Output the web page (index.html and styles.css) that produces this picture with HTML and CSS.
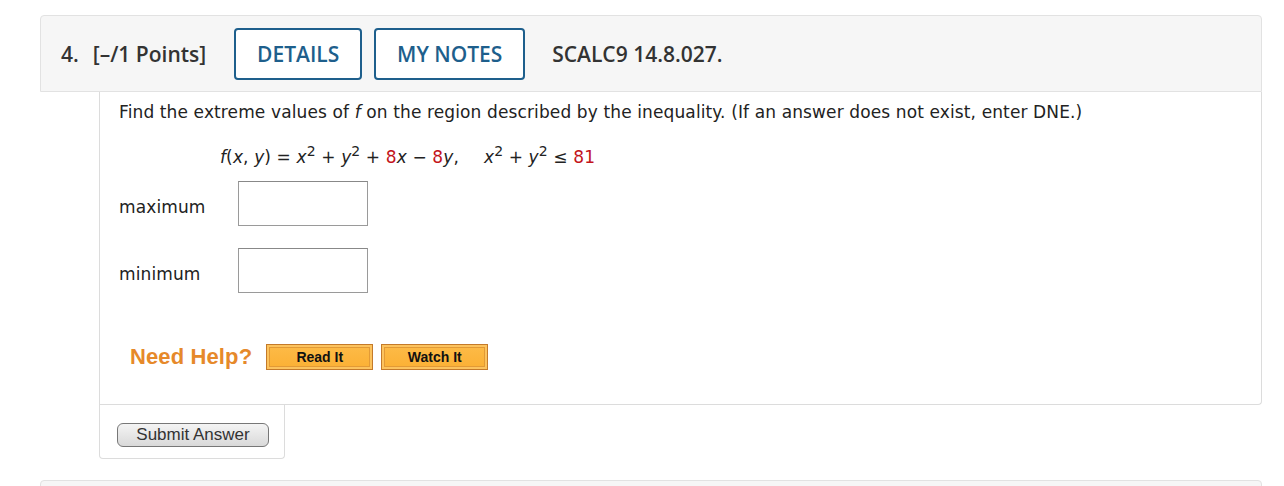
FILE: index.html
```html
<!DOCTYPE html>
<html>
<head>
<meta charset="utf-8">
<link rel="stylesheet" href="styles.css">
</head>
<body>
<div class="page">
  <div class="header">
    <span class="qnum">4.</span>
    <span class="points">[–/1 Points]</span>
    <button class="hbtn details">DETAILS</button>
    <button class="hbtn notes">MY NOTES</button>
    <span class="code">SCALC9 14.8.027.</span>
  </div>
  <div class="content">
    <p class="prompt">Find the extreme values of <i>f</i> on the region described by the inequality. (If an answer does not exist, enter DNE.)</p>
    <p class="formula"><i>f</i>(<i>x</i>, <i>y</i>) = <i>x</i><sup>2</sup> + <i>y</i><sup>2</sup> + <span class="red">8</span><i>x</i> − <span class="red">8</span><i>y</i>,<span class="sp"></span><i>x</i><sup>2</sup> + <i>y</i><sup>2</sup> ≤ <span class="red">81</span></p>
    <div class="row first"><span class="label">maximum</span><span class="box"></span></div>
    <div class="row second"><span class="label">minimum</span><span class="box"></span></div>
    <div class="help">
      <span class="need">Need Help?</span>
      <button class="obtn">Read It</button>
      <button class="obtn">Watch It</button>
    </div>
  </div>
  <div class="submit-area">
    <button class="submit">Submit Answer</button>
  </div>
  <div class="next"></div>
</div>
</body>
</html>
```

FILE: styles.css
```css
html, body { margin: 0; padding: 0; background: #fff; }
.page { padding: 15px 22px 0 40px; }
.header {
  height: 75px;
  background: #f6f6f6;
  border: 1px solid #e2e2e2;
  border-radius: 4px 4px 0 0;
  display: flex;
  align-items: center;
  padding-left: 20px;
  font-family: "Open Sans", sans-serif;
  font-weight: 600;
  font-size: 21px;
  color: #333;
}
.qnum { margin-right: 14px; }
.points { margin-right: 28px; }
.hbtn {
  height: 52px;
  box-sizing: border-box;
  border: 2px solid #1e5f8c;
  border-radius: 4px;
  background: #fff;
  color: #1e5f8c;
  font-family: "Open Sans", sans-serif;
  font-weight: 600;
  font-size: 21px;
  padding: 0;
  margin-top: 1px;
}
.details { width: 128px; margin-right: 12px; }
.notes { width: 151px; margin-right: 27px; }
.content {
  margin-left: 59px;
  border: 1px solid #dcdcdc;
  border-top: none;
  border-radius: 0 0 4px 0;
  padding: 9px 19px 0 19px;
  height: 303px;
  font-family: Verdana, "DejaVu Sans", sans-serif;
  font-size: 17px;
  letter-spacing: 0.12px;
  color: #222;
}
.prompt { margin: 0; line-height: 22px; }
.formula { margin: 23px 0 0 101px; line-height: 22px; }
.formula sup { font-size: 14px; line-height: 0; vertical-align: 7px; }
.red { color: #c3141b; }
.sp { display: inline-block; width: 25px; }
.row { display: flex; align-items: center; }
.row.first { margin-top: 13px; }
.row.second { margin-top: 22px; }
.label { width: 119px; padding-top: 6px; }
.box {
  width: 128px;
  height: 43px;
  border: 1px solid #9a9a9a;
  border-top-color: #888;
  background: #fff;
}
.help { display: flex; align-items: center; margin-top: 51px; padding-left: 11px; }
.need {
  font-family: Arial, "Liberation Sans", sans-serif;
  font-weight: bold;
  font-size: 22px;
  color: #e6892a;
  margin-right: 14px;
}
.obtn {
  width: 107px;
  height: 26px;
  box-sizing: border-box;
  margin-right: 8px;
  background: linear-gradient(#fdbb48, #fbb034);
  border: 1px solid #c47a2a;
  box-shadow: inset 0 0 0 2px #fcc35e, inset 0 0 0 3px #e29a36;
  font-family: Arial, "Liberation Sans", sans-serif;
  font-weight: bold;
  font-size: 14px;
  color: #111;
  padding: 0;
}
.submit-area {
  margin-left: 59px;
  width: 184px;
  height: 53px;
  border: 1px solid #dcdcdc;
  border-top: none;
  border-radius: 0 0 4px 4px;
  display: flex;
  align-items: flex-start;
}
.submit {
  margin: 18px 0 0 17px;
  width: 152px;
  height: 24px;
  border: 1px solid #777;
  border-radius: 6px;
  background: linear-gradient(#f4f4f4, #d9d9d9);
  font-family: Arial, "Liberation Sans", sans-serif;
  font-size: 17px;
  color: #333;
  padding: 0;
}
.next {
  margin-top: 21px;
  height: 20px;
  background: #f6f6f6;
  border: 1px solid #e2e2e2;
  border-radius: 4px 4px 0 0;
}
```
